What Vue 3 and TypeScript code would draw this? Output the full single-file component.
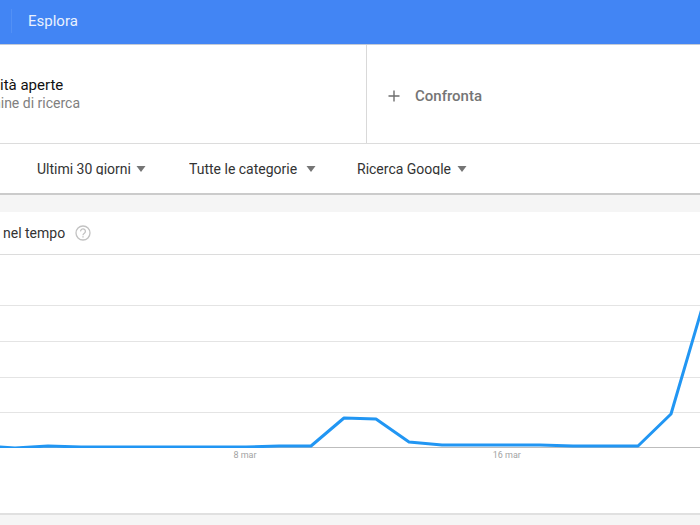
<script setup lang="ts">
import { ref } from 'vue'

interface Filter {
  id: string
  label: string
  options: string[]
  clipped: boolean
}

const filters: Filter[] = [
  { id: 'period', label: 'Periodo', options: ['Ultimi 30 giorni'], clipped: true },
  { id: 'category', label: 'Categoria', options: ['Tutte le categorie'], clipped: false },
  { id: 'source', label: 'Tipo di ricerca', options: ['Ricerca Google'], clipped: true },
]
const selected = ref<string[]>(filters.map((f) => f.options[0]))

const gridLines: number[] = [50, 86, 122, 157]
const baseline = 192
const ticks = [
  { x: '35%', text: '8 mar' },
  { x: '72.4%', text: '16 mar' },
]
const series: [number, number][] = [
  [-18, 191], [15, 193], [48, 191], [81, 192], [246, 192], [279, 191], [311, 191],
  [344, 163], [376, 164], [409, 187], [442, 190], [540, 190], [573, 191], [638, 191],
  [671, 159], [703, 50],
]
const points = series.map((p) => p.join(',')).join(' ')
</script>

<template>
  <div class="page">
    <header class="topbar">
      <span class="divider"></span>
      <a class="nav" href="#">Esplora</a>
    </header>

    <section class="terms">
      <div class="term">
        <div class="name">ità aperte</div>
        <div class="kind">mine di ricerca</div>
      </div>
      <button class="compare" type="button">
        <svg width="12" height="12" viewBox="0 0 12 12" aria-hidden="true">
          <path d="M6 0.5V11.5M0.5 6H11.5" stroke="#6e6e6e" stroke-width="1.4" fill="none" />
        </svg>
        <span>Confronta</span>
      </button>
    </section>

    <section class="filters">
      <div v-for="(f, i) in filters" :key="f.id" class="filter" :class="f.id">
        <div class="clip" :class="{ short: f.clipped }">
          <select :id="f.id" v-model="selected[i]" :aria-label="f.label">
            <option v-for="o in f.options" :key="o">{{ o }}</option>
          </select>
        </div>
        <svg class="arrow" width="10" height="6" viewBox="0 0 10 6" aria-hidden="true">
          <path d="M0.5 0H9.5L5 6Z" fill="#757575" />
        </svg>
      </div>
    </section>

    <main class="card">
      <div class="card-head">
        <h2>nel tempo</h2>
        <button class="help" type="button" aria-label="Guida">
          <svg width="16" height="16" viewBox="0 0 16 16" fill="none" stroke="#c2c2c2" aria-hidden="true">
            <circle cx="8" cy="8" r="7" stroke-width="1.3" />
            <path d="M5.6 6.4A2.4 2.4 0 1 1 9.4 8.2C8.5 8.8 8 9.1 8 10.2" stroke-width="1.3" />
            <path d="M8 11.2V12.6" stroke-width="1.4" />
          </svg>
        </button>
      </div>
      <svg class="chart" width="100%" height="258">
        <line v-for="y in gridLines" :key="y" class="grid" x1="0" x2="100%" :y1="y + 0.5" :y2="y + 0.5" />
        <line class="base" x1="0" x2="100%" :y1="baseline + 0.5" :y2="baseline + 0.5" />
        <svg width="100%" height="193" viewBox="0 0 700 193" preserveAspectRatio="none">
          <polyline class="series" :points="points" />
        </svg>
        <text v-for="t in ticks" :key="t.text" :x="t.x" y="203">{{ t.text }}</text>
      </svg>
    </main>
  </div>
</template>

<style>
body {
  background: #f5f5f5;
}
</style>

<style scoped>
.page {
  font-family: Roboto, "Liberation Sans", sans-serif;
  color: #333;
  overflow: hidden;
}
button,
select {
  font: inherit;
  color: inherit;
  border: 0;
  padding: 0;
  margin: 0;
  background: none;
}
.topbar {
  display: flex;
  align-items: center;
  gap: 16px;
  height: 44px;
  padding-left: 11px;
  padding-bottom: 2px;
  box-sizing: border-box;
  background: #4285f4;
}
.divider {
  width: 1px;
  height: 24px;
  background: #5290f5;
}
.nav {
  font-size: 15px;
  line-height: 20px;
  color: #e9f1fe;
  text-decoration: none;
}
.terms {
  display: grid;
  grid-template-columns: 367fr 333fr;
  height: 100px;
  box-sizing: border-box;
  background: #fff;
  border-top: 1px solid #c3cad6;
  border-bottom: 1px solid #dcdcdc;
}
.term {
  display: flex;
  flex-direction: column;
  justify-content: center;
  border-right: 1px solid #d9d9d9;
}
.name {
  font-size: 15px;
  line-height: 18px;
  color: #111;
}
.kind {
  display: flex;
  justify-content: flex-end;
  width: 80px;
  font-size: 14px;
  line-height: 18px;
  white-space: nowrap;
  color: #808080;
}
.compare {
  display: flex;
  align-items: center;
  gap: 15px;
  padding: 4px 0 0 21px;
  font-size: 15px;
  line-height: 20px;
  font-weight: 500;
  color: #757575;
}
.filters {
  display: flex;
  align-items: center;
  height: 51px;
  box-sizing: border-box;
  padding-left: 37px;
  background: #fff;
  border-bottom: 2px solid #cbcbcb;
}
.filter {
  display: flex;
  align-items: center;
  gap: 5px;
}
.period {
  margin-right: 43px;
}
.category {
  gap: 8px;
  margin-right: 41px;
}
.clip {
  height: 20px;
}
.clip.short {
  height: 16px;
  margin-bottom: 4px;
  overflow: hidden;
}
.filter select {
  display: block;
  appearance: none;
  height: 20px;
  font-size: 14px;
  line-height: 20px;
  color: #333;
}
.card {
  margin-top: 17px;
  background: #fff;
  border-bottom: 2px solid #e0e0e0;
}
.card-head {
  display: flex;
  align-items: center;
  gap: 10px;
  height: 43px;
  box-sizing: border-box;
  padding-left: 3px;
  border-bottom: 1px solid #dcdcdc;
}
h2 {
  margin: 0;
  font-size: 14px;
  line-height: 20px;
  font-weight: 400;
}
.help {
  display: flex;
}
.chart {
  display: block;
}
.grid {
  stroke: #e4e4e4;
}
.base {
  stroke: #bdbdbd;
}
.series {
  fill: none;
  stroke: #2196f3;
  stroke-width: 3px;
  stroke-linejoin: round;
  vector-effect: non-scaling-stroke;
}
.chart text {
  font-size: 9px;
  fill: #a3a3a3;
  text-anchor: middle;
}
</style>
